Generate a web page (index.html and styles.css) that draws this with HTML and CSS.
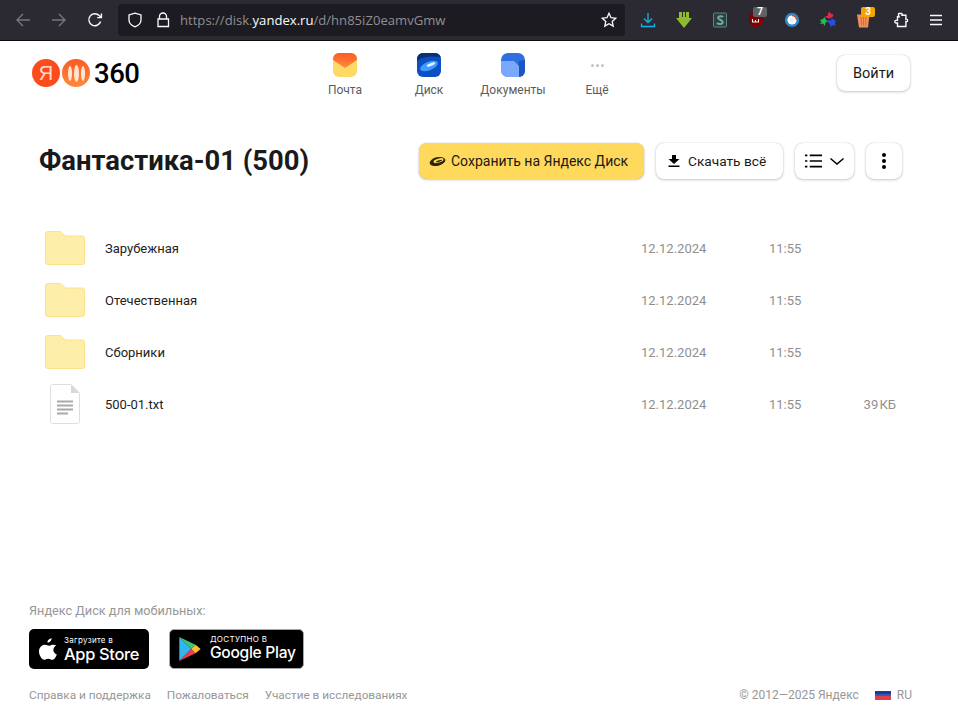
FILE: index.html
```html
<!DOCTYPE html>
<html lang="ru">
<head>
    <meta charset="UTF-8">
    <title>Фантастика-01 (500)</title>
    <link rel="stylesheet" href="styles.css">
</head>
<body>

<!-- панель браузера -->
<div class="browser-bar">
    <svg class="tb-icon dim" viewBox="0 0 16 16"><path d="M15 8H2M8 2L2 8l6 6"/></svg>
    <svg class="tb-icon dim" viewBox="0 0 16 16"><path d="M1 8h13M8 2l6 6-6 6"/></svg>
    <svg class="tb-icon" viewBox="0 0 16 16"><path d="M13.600 9.500A6 6 0 1 1 12.200 3.600L14 5.400M14.400 1.400v4.200h-4.200"/></svg>
    <div class="url-box">
        <svg class="url-icon" viewBox="0 0 16 16"><path d="M8 1.200l6 1.800v5c0 3.400-2.600 5.600-6 6.800C4.600 13.600 2 11.400 2 8V3z"/></svg>
        <svg class="url-icon lock" viewBox="0 0 16 16"><path d="M4.500 7V4.500a3.500 3.500 0 0 1 7 0V7M3 7h10.500v7.500H3z"/></svg>
        <span class="url-text">https://disk.<b>yandex.ru</b>/d/hn85iZ0eamvGmw</span>
        <svg class="url-star" viewBox="0 0 16 16"><path d="M8 1.300l2 4.400 4.700.5-3.500 3.200 1 4.700L8 11.700l-4.200 2.400 1-4.700L1.300 6.200 6 5.700z"/></svg>
    </div>
    <div class="ext-list">
        <svg class="ext" viewBox="0 0 16 16"><path class="ln-blue" d="M8 1v9M4 6.500l4 4 4-4M1.500 11.500v3h13v-3"/></svg>
        <svg class="ext" viewBox="0 0 16 16"><path fill="#8fbc2e" d="M3 0h3v5h1V0h2v5h1V0h3v6h3l-8 10L0 6h3z"/></svg>
        <svg class="ext" viewBox="0 0 16 16"><rect x="1.500" y="1" width="13" height="14" rx="1" fill="#27423f" stroke="#5f8584"/><path d="M11 5c-.6-1-4.500-1.500-5 .5S11 8 10.800 10.300 6 12 5 11" fill="none" stroke="#7aa6a3" stroke-width="2"/></svg>
        <span class="ext-wrap">
            <svg class="ext" viewBox="0 0 16 16"><path fill="#800000" d="M1 1h14v8c0 3-3.500 5-7 7-3.500-2-7-4-7-7z"/><path d="M4.500 7v3h3V8v2h3V7" fill="none" stroke="#eee" stroke-width="1.100"/></svg>
            <span class="ext-badge grey">7</span>
        </span>
        <svg class="ext" viewBox="0 0 16 16"><circle cx="8" cy="8" r="7.200" fill="#2f86c5"/><circle cx="8" cy="8" r="4.600" fill="#fff"/><path d="M8 3.500a4.500 4.500 0 0 1 4.500 4.500" fill="none" stroke="#d9542b" stroke-width="1.300"/><circle cx="8" cy="8" r="2.400" fill="#e8f1f8"/></svg>
        <svg class="ext" viewBox="0 0 16 16"><path fill="#e8264a" d="M8 1l2-1 1 2 2.500.5-1 2.500-3 1.500L7 6 5 4.500l3-1z"/><path fill="#1fc14a" d="M0 8l3-1 1.500-2L6 8l2 1.500-2.500 1L5 14l-2-2.500-3 .5 1.500-2z"/><path fill="#2a4fe0" d="M8 8l3 .5 1-2.500 1.500 2 2.500.5-1 2.500.5 3-2.500-1-2.500 2-.5-3-2-1.500z"/></svg>
        <span class="ext-wrap">
            <svg class="ext" viewBox="0 0 16 16"><path fill="#ef8f5a" d="M1 2.500h12.500L12 15.500H3z"/><path d="M5 5l.5 8.500M7.500 5v8.500M10 5l-.5 8.500" stroke="#d2703c"/></svg>
            <span class="ext-badge orange">3</span>
        </span>
    </div>
    <svg class="tb-icon puzzle" viewBox="0 0 16 16"><path d="M6 1.500h2.200c1-.1 1.400 1 .9 1.800h3.800v3.900c.9-.3 1.700.2 1.700 1.200s-.8 1.700-1.700 1.300v4.800H4.500v-3.500H3c-1.600-.4-1.600-2.400 0-2.600h1.500V4.700H6c-.8-1 -.6-3.100 0-3.200z"/></svg>
    <svg class="tb-icon menu" viewBox="0 0 16 16"><path d="M2 3.500h12M2 8h12M2 12.500h12"/></svg>
</div>

<div class="page">
    <header class="header">
        <div class="logo">
            <span class="logo-circle ya">Я</span>
            <span class="logo-circle mid"><i></i><i></i><i></i></span>
            <span class="logo-360">360</span>
        </div>
        <nav class="nav">
            <a class="nav-item">
                <svg class="nav-icon" viewBox="0 0 24 24">
                    <defs>
                        <linearGradient id="mailTop" x1="0" y1="0" x2="0" y2="1"><stop offset="0" stop-color="#ff5a2a"/><stop offset="1" stop-color="#ff8c3a"/></linearGradient>
                    </defs>
                    <rect width="24" height="24" rx="6" fill="#ffd966"/>
                    <path d="M0 6a6 6 0 0 1 6-6h12a6 6 0 0 1 6 6v1l-12 8L0 7z" fill="url(#mailTop)"/>
                </svg>
                <span>Почта</span>
            </a>
            <a class="nav-item">
                <svg class="nav-icon" viewBox="0 0 24 24">
                    <rect width="24" height="24" rx="6" fill="#0b4fc0"/>
                    <path d="M0 8c6-5 14-5 24-4V6a6 6 0 0 0-6-6H6a6 6 0 0 0-6 6z" fill="#0a2f75"/>
                    <ellipse cx="12" cy="13" rx="9.500" ry="4.200" transform="rotate(-22 12 13)" fill="#3f9bff"/>
                    <ellipse cx="14" cy="11.500" rx="4.500" ry="1.400" transform="rotate(-22 14 11.500)" fill="#e8f3ff"/>
                </svg>
                <span>Диск</span>
            </a>
            <a class="nav-item">
                <svg class="nav-icon" viewBox="0 0 24 24">
                    <rect width="24" height="24" rx="7" fill="#2f6fe0"/>
                    <path d="M24 7v11a6 6 0 0 1-6 6h-3l3-16z" fill="#1a56c4"/>
                    <path d="M0 8h13l5 5v11H7a7 7 0 0 1-7-7z" fill="#7aa8ff"/>
                </svg>
                <span>Документы</span>
            </a>
            <a class="nav-item">
                <span class="nav-dots"><i></i><i></i><i></i></span>
                <span>Ещё</span>
            </a>
        </nav>
        <button class="btn btn-login">Войти</button>
    </header>

    <section class="title-row">
        <h1 class="title">Фантастика-01 (500)</h1>
        <div class="actions">
            <button class="btn btn-save">
                <svg class="disk-icon" viewBox="0 0 17 11"><ellipse cx="8.500" cy="5.500" rx="8" ry="4.300" transform="rotate(-14 8.500 5.500)" fill="#2a2410"/><ellipse cx="9.500" cy="4.600" rx="5.200" ry="2" transform="rotate(-16 9.500 4.600)" fill="#ffd95c"/><ellipse cx="10" cy="5" rx="3.400" ry=".8" transform="rotate(-16 10 5)" fill="#2a2410"/></svg>
                Сохранить на Яндекс Диск
            </button>
            <button class="btn btn-download">
                <svg class="dl-icon" viewBox="0 0 12 12"><path d="M4 0h4v4h3.500L6 9 .5 4H4zM.5 10.500h11V12H.5z"/></svg>
                Скачать всё
            </button>
            <button class="btn btn-view">
                <svg class="list-icon" viewBox="0 0 18 14"><path d="M0 1h2.500M5 1h13M0 7h2.500M5 7h13M0 13h2.500M5 13h13"/></svg>
                <svg class="chev-icon" viewBox="0 0 16 9"><path d="M1.500 1.500L8 7l6.500-5.500"/></svg>
            </button>
            <button class="btn btn-more"><i></i><i></i><i></i></button>
        </div>
    </section>

    <main class="files">
        <div class="file-row">
            <svg class="folder" viewBox="0 0 40 34"><path d="M3 .5h11c1.500 0 2.500.6 3.500 1.700L20.500 5H37a2.500 2.500 0 0 1 2.500 2.500V31a2.500 2.500 0 0 1-2.500 2.500H3A2.500 2.500 0 0 1 .5 31V3A2.500 2.500 0 0 1 3 .5z"/></svg>
            <span class="file-name">Зарубежная</span>
            <span class="file-date">12.12.2024</span>
            <span class="file-time">11:55</span>
            <span class="file-size"></span>
        </div>
        <div class="file-row">
            <svg class="folder" viewBox="0 0 40 34"><path d="M3 .5h11c1.500 0 2.500.6 3.500 1.700L20.500 5H37a2.500 2.500 0 0 1 2.500 2.500V31a2.500 2.500 0 0 1-2.500 2.500H3A2.500 2.500 0 0 1 .5 31V3A2.500 2.500 0 0 1 3 .5z"/></svg>
            <span class="file-name">Отечественная</span>
            <span class="file-date">12.12.2024</span>
            <span class="file-time">11:55</span>
            <span class="file-size"></span>
        </div>
        <div class="file-row">
            <svg class="folder" viewBox="0 0 40 34"><path d="M3 .5h11c1.500 0 2.500.6 3.500 1.700L20.500 5H37a2.500 2.500 0 0 1 2.500 2.500V31a2.500 2.500 0 0 1-2.500 2.500H3A2.500 2.500 0 0 1 .5 31V3A2.500 2.500 0 0 1 3 .5z"/></svg>
            <span class="file-name">Сборники</span>
            <span class="file-date">12.12.2024</span>
            <span class="file-time">11:55</span>
            <span class="file-size"></span>
        </div>
        <div class="file-row">
            <svg class="txt" viewBox="0 0 30 40">
                <path class="txt-sheet" d="M2.500.5H21L29.500 9v28.500a2 2 0 0 1-2 2h-25a2 2 0 0 1-2-2v-35a2 2 0 0 1 2-2z"/>
                <path d="M21 .5V9h8.500z" fill="#d9d9d9"/>
                <path d="M7 17.500h16M7 21.500h16M7 25.500h16M7 29.500h11" stroke="#a9a9a9" stroke-width="1.800"/>
            </svg>
            <span class="file-name">500-01.txt</span>
            <span class="file-date">12.12.2024</span>
            <span class="file-time">11:55</span>
            <span class="file-size">39 КБ</span>
        </div>
    </main>

    <footer class="footer">
        <div class="mobile-title">Яндекс Диск для мобильных:</div>
        <div class="stores">
            <a class="store store-apple">
                <svg class="store-icon apple" viewBox="0 0 20 24"><path fill="#fff" d="M14 0c.2 2.600-2.200 5-4.600 4.800C9.100 2.400 11.600.2 14 0zM19.300 8.200c-3-1.800-6-.4-7.600.2-1.800.3-3.400-1.400-5.600-1C3.200 7.700 0 10.300 0 14.800c0 4.400 3.300 9.200 5.600 9.200 1.800 0 2.500-1.200 4.600-1.200s2.700 1.200 4.600 1.200c2.200-.1 4.200-3.700 5-6-5-2-5-8-.5-10z"/></svg>
                <span class="store-text">
                    <small>Загрузите в</small>
                    <b>App Store</b>
                </span>
            </a>
            <a class="store store-google">
                <svg class="store-icon play" viewBox="0 0 24 28">
                    <path d="M1 1v26l13-13z" fill="#2fb7ee"/>
                    <path d="M1 1l13 13 4.500-4.500z" fill="#3fc47a"/>
                    <path d="M1 27l13-13 4.500 4.500z" fill="#ea3d4f"/>
                    <path d="M18.500 9.500L14 14l4.500 4.500L24 14z" fill="#fbc02d"/>
                </svg>
                <span class="store-text">
                    <small class="upper">Доступно в</small>
                    <b>Google Play</b>
                </span>
            </a>
        </div>
        <div class="footer-bottom">
            <div class="footer-links">
                <a>Справка и поддержка</a>
                <a>Пожаловаться</a>
                <a>Участие в исследованиях</a>
            </div>
            <div class="footer-right">
                <span>© 2012—2025 Яндекс</span>
                <span class="lang"><span class="flag"></span>RU</span>
            </div>
        </div>
    </footer>
</div>

</body>
</html>
```

FILE: styles.css
```css
* {
    box-sizing: border-box;
}

html, body {
    height: 100%;
}

body {
    margin: 0;
    display: flex;
    flex-direction: column;
    overflow: hidden;
    background-color: #fff;
    color: #000;
    font-family: Roboto, "Liberation Sans", sans-serif;
    font-size: 13px;
}

/* браузер */
.browser-bar {
    display: flex;
    align-items: center;
    flex: none;
    height: 41px;
    padding: 0 0 1px 15px;
    background-color: #2b2a33;
    border-bottom: 1px solid #0c0c0d;
}

.tb-icon {
    flex: none;
    width: 16px;
    height: 16px;
    margin-right: 20px;
    fill: none;
    stroke: #fbfbfe;
    stroke-width: 1.400;
}

.tb-icon.dim {
    stroke: #77767c;
}

.url-box {
    display: flex;
    align-items: center;
    flex: none;
    width: 507px;
    height: 32px;
    margin-left: -5px;
    padding: 0 8px 0 9px;
    background-color: #1c1b22;
    border-radius: 4px;
}

.url-icon {
    flex: none;
    width: 16px;
    height: 16px;
    margin-right: 12px;
    fill: none;
    stroke: #fbfbfe;
    stroke-width: 1.300;
}

.url-icon.lock {
    margin-right: 10px;
}

.url-text {
    flex: 1;
    margin-left: -1px;
    color: #8f8f94;
    font-family: "Open Sans", sans-serif;
    font-size: 13.100px;
    white-space: nowrap;
}

.url-text b {
    color: #fbfbfe;
    font-weight: 400;
}

.url-star {
    flex: none;
    width: 16px;
    height: 16px;
    fill: none;
    stroke: #fbfbfe;
    stroke-width: 1.300;
}

.ext-list {
    display: flex;
    align-items: center;
    gap: 20px;
    flex: none;
    margin: 0 21px 0 15px;
}

.ext {
    display: block;
    width: 16px;
    height: 16px;
}

.ln-blue {
    fill: none;
    stroke: #12b5e8;
    stroke-width: 1.300;
}

.ext-wrap {
    position: relative;
    display: block;
}

.ext-badge {
    position: absolute;
    top: -5px;
    left: 5px;
    width: 14px;
    height: 10px;
    border-radius: 2px;
    color: #fff;
    font-size: 10px;
    font-weight: 700;
    line-height: 10px;
    text-align: center;
}

.ext-badge.grey {
    background-color: #5f6368;
}

.ext-badge.orange {
    background-color: #f5a300;
}

.tb-icon.puzzle {
    margin-right: 19px;
}

.tb-icon.menu {
    margin-right: 0;
    stroke-width: 1.300;
}

/* страница */
.page {
    display: flex;
    flex: 1;
    flex-direction: column;
    min-height: 0;
}

.header {
    display: flex;
    align-items: flex-start;
    flex: none;
    height: 82px;
    padding: 14px 48px 0 32px;
}

.logo {
    display: flex;
    align-items: center;
    width: 271px;
    height: 36px;
}

.logo-circle {
    display: flex;
    align-items: center;
    justify-content: center;
    width: 28px;
    height: 28px;
    border-radius: 50%;
    color: #ffd9c9;
    font-family: "Liberation Sans", sans-serif;
    font-size: 20px;
    font-weight: 400;
}

.logo-circle.ya {
    background-color: #fc4c1c;
}

.logo-circle.mid {
    gap: 2px;
    margin-left: 2px;
    background: linear-gradient(#fc5a22, #ff8a3a);
}

.logo-circle.mid i {
    display: block;
    width: 4px;
    height: 15px;
    border-radius: 50%;
    background-color: #ffe3d4;
}

.logo-circle.mid i:nth-child(2) {
    width: 5px;
    height: 17px;
}

.logo-360 {
    margin-left: 4px;
    font-size: 27.500px;
    font-weight: 500;
    letter-spacing: -0.500px;
}

.nav {
    display: flex;
}

.nav-item {
    display: flex;
    flex-direction: column;
    align-items: center;
    width: 84px;
    color: #5c5c5c;
    font-size: 12px;
}

.nav-icon {
    display: block;
    width: 24px;
    height: 24px;
    margin: -2px 0 6px;
}

.nav-dots {
    display: flex;
    align-items: center;
    justify-content: center;
    gap: 2px;
    width: 24px;
    height: 24px;
    margin: -2px 0 6px;
}

.nav-dots i {
    display: block;
    width: 3px;
    height: 3px;
    border-radius: 50%;
    background-color: #c4c4c4;
}

.btn {
    display: flex;
    align-items: center;
    justify-content: center;
    flex: none;
    height: 36px;
    padding: 0;
    border: none;
    border-radius: 8px;
    background-color: #fff;
    box-shadow: 0 0 1px rgba(0,0,0,0.25), 0 1px 3px rgba(0,0,0,0.2);
    color: #1a1a1a;
    font-family: inherit;
    font-size: 14px;
    cursor: pointer;
}

.btn-login {
    width: 73px;
    margin-left: auto;
    font-size: 14.500px;
}

.title-row {
    display: flex;
    align-items: center;
    justify-content: space-between;
    flex: none;
    height: 76px;
    padding: 0 56px 0 39px;
}

.title {
    margin: 0;
    color: #1a1a1a;
    font-size: 27.400px;
    font-weight: 700;
}

.actions {
    display: flex;
    gap: 12px;
}

.btn-save {
    justify-content: flex-start;
    width: 225px;
    padding-left: 10px;
    background-color: #ffd95c;
}

.disk-icon {
    width: 17px;
    height: 11px;
    margin-right: 5px;
}

.btn-download {
    justify-content: flex-start;
    width: 127px;
    padding-left: 12px;
    font-size: 13.700px;
}

.dl-icon {
    width: 12px;
    height: 12px;
    margin-right: 8px;
}

.btn-view {
    gap: 7px;
    width: 59px;
}

.list-icon {
    width: 17px;
    height: 14px;
    fill: none;
    stroke: #000;
    stroke-width: 1.800;
}

.chev-icon {
    width: 16px;
    height: 9px;
    fill: none;
    stroke: #000;
    stroke-width: 1.500;
}

.btn-more {
    flex-direction: column;
    gap: 2px;
    width: 36px;
}

.btn-more i {
    display: block;
    width: 4px;
    height: 4px;
    border-radius: 50%;
    background-color: #000;
}

/* список файлов */
.files {
    flex: none;
    margin-top: 23px;
}

.file-row {
    display: grid;
    grid-template-columns: 60px 1fr 128px 94px 33px;
    align-items: center;
    height: 52px;
    padding: 0 62px 0 45px;
    color: #222;
    font-size: 13px;
}

.folder {
    display: block;
    width: 40px;
    height: 34px;
    fill: #fdeeaa;
    stroke: #fde28a;
}

.txt {
    display: block;
    width: 30px;
    height: 40px;
    margin-left: 5px;
}

.txt-sheet {
    fill: #fff;
    stroke: #dedede;
}

.file-date,
.file-time,
.file-size {
    color: #8f8f8f;
}

.file-size {
    text-align: right;
    white-space: nowrap;
    word-spacing: -2px;
}

/* подвал */
.footer {
    flex: none;
    margin-top: auto;
    padding: 0 46px 10px 29px;
    color: #979797;
    font-size: 12px;
}

.mobile-title {
    font-size: 12.700px;
}

.stores {
    display: flex;
    gap: 20px;
    margin-top: 11px;
}

.store {
    display: flex;
    align-items: center;
    height: 40px;
    border-radius: 5px;
    background-color: #000;
    color: #fff;
}

.store-apple {
    width: 120px;
    padding-left: 10px;
}

.store-google {
    width: 135px;
    padding-left: 8px;
    border: 1px solid #a6a6a6;
}

.store-icon {
    flex: none;
    display: block;
}

.store-icon.apple {
    width: 18px;
    height: 22px;
    margin-right: 7px;
}

.store-icon.play {
    width: 23px;
    height: 26px;
    margin-right: 9px;
}

.store-text {
    display: flex;
    flex-direction: column;
    font-family: Inter, sans-serif;
    line-height: 1;
}

.store-text small {
    font-size: 8px;
    letter-spacing: 0.300px;
}

.store-text .upper {
    margin-top: -2px;
    text-transform: uppercase;
}

.store-text b {
    margin-top: 2px;
    font-size: 16.400px;
    font-weight: 500;
    letter-spacing: -0.300px;
    white-space: nowrap;
}

.store-google b {
    font-size: 15.600px;
}

.footer-bottom {
    display: flex;
    justify-content: space-between;
    align-items: center;
    margin-top: 19px;
}

.footer-links {
    display: flex;
    gap: 16px;
    font-size: 11.800px;
}

.footer-right {
    display: flex;
    align-items: center;
}

.lang {
    display: flex;
    align-items: center;
    margin-left: 16px;
}

.flag {
    width: 16px;
    height: 9px;
    margin-right: 6px;
    background: linear-gradient(#1e3a8a 0 33%, #2a5cc4 33% 55%, #e0404a 55%);
}
```
